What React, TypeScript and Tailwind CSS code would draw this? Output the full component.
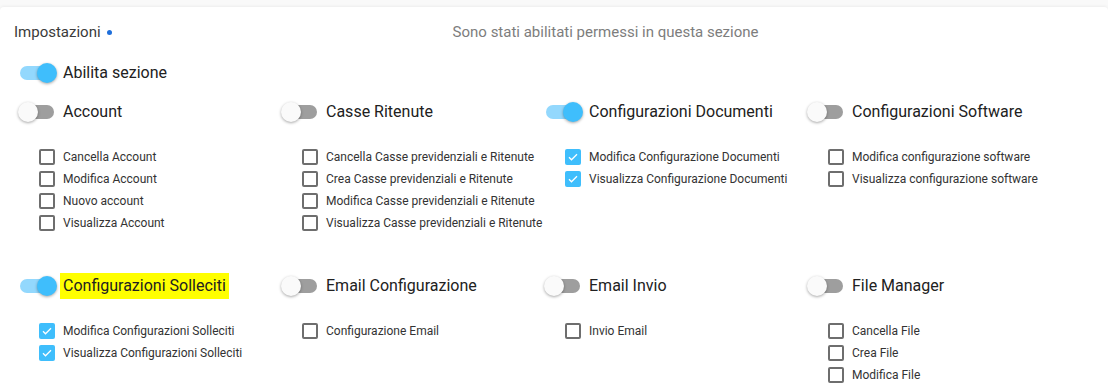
import React, { useState } from "react";

type Section = {
  title: string;
  enabled: boolean;
  highlight?: boolean;
  perms: { label: string; checked: boolean }[];
};

const initialSections: Section[] = [
  {
    title: "Account",
    enabled: false,
    perms: [
      { label: "Cancella Account", checked: false },
      { label: "Modifica Account", checked: false },
      { label: "Nuovo account", checked: false },
      { label: "Visualizza Account", checked: false },
    ],
  },
  {
    title: "Casse Ritenute",
    enabled: false,
    perms: [
      { label: "Cancella Casse previdenziali e Ritenute", checked: false },
      { label: "Crea Casse previdenziali e Ritenute", checked: false },
      { label: "Modifica Casse previdenziali e Ritenute", checked: false },
      { label: "Visualizza Casse previdenziali e Ritenute", checked: false },
    ],
  },
  {
    title: "Configurazioni Documenti",
    enabled: true,
    perms: [
      { label: "Modifica Configurazione Documenti", checked: true },
      { label: "Visualizza Configurazione Documenti", checked: true },
    ],
  },
  {
    title: "Configurazioni Software",
    enabled: false,
    perms: [
      { label: "Modifica configurazione software", checked: false },
      { label: "Visualizza configurazione software", checked: false },
    ],
  },
  {
    title: "Configurazioni Solleciti",
    enabled: true,
    highlight: true,
    perms: [
      { label: "Modifica Configurazioni Solleciti", checked: true },
      { label: "Visualizza Configurazioni Solleciti", checked: true },
    ],
  },
  {
    title: "Email Configurazione",
    enabled: false,
    perms: [{ label: "Configurazione Email", checked: false }],
  },
  {
    title: "Email Invio",
    enabled: false,
    perms: [{ label: "Invio Email", checked: false }],
  },
  {
    title: "File Manager",
    enabled: false,
    perms: [
      { label: "Cancella File", checked: false },
      { label: "Crea File", checked: false },
      { label: "Modifica File", checked: false },
    ],
  },
];

const Switch: React.FC<{ on: boolean; onClick: () => void }> = ({ on, onClick }) => (
  <button
    onClick={onClick}
    className={`relative w-[34px] h-[14px] rounded-full shrink-0 ${
      on ? "bg-[#93d8fd]" : "bg-[#9e9e9e]"
    }`}
  >
    <span
      className={`absolute top-[-3px] w-[20px] h-[20px] rounded-full shadow-[0_1px_3px_rgba(0,0,0,0.35)] ${
        on ? "left-[17px] bg-[#3fbefc]" : "left-[-2px] bg-[#fafafa]"
      }`}
    />
  </button>
);

const Check: React.FC<{ checked: boolean; onClick: () => void }> = ({ checked, onClick }) =>
  checked ? (
    <button
      onClick={onClick}
      className="w-[16px] h-[16px] rounded-[2px] bg-[#3fbefc] flex items-center justify-center shrink-0"
    >
      <svg width="12" height="12" viewBox="0 0 24 24">
        <path d="M4 12.5l5 5L20 6.5" fill="none" stroke="white" strokeWidth="2.6" />
      </svg>
    </button>
  ) : (
    <button
      onClick={onClick}
      className="w-[16px] h-[16px] rounded-[2px] border-2 border-[#6e6e6e] shrink-0"
    />
  );

export default function App() {
  const [enabled, setEnabled] = useState(true);
  const [sections, setSections] = useState<Section[]>(initialSections);

  const toggleSection = (i: number) => {
    const next = [...sections];
    next[i] = { ...next[i], enabled: !next[i].enabled };
    setSections(next);
  };

  const togglePerm = (i: number, j: number) => {
    const next = [...sections];
    const perms = [...next[i].perms];
    perms[j] = { ...perms[j], checked: !perms[j].checked };
    next[i] = { ...next[i], perms };
    setSections(next);
  };

  return (
    <div
      className="w-[1108px] h-[389px] overflow-hidden bg-[#f9f9f9] pt-[7px]"
      style={{ fontFamily: "Roboto, 'Liberation Sans', sans-serif" }}
    >
      <div className="bg-white h-full rounded-t-[4px] shadow-[0_-1px_3px_rgba(0,0,0,0.05)] pt-[15px] pl-[14px]">
        {/* header */}
        <div className="flex items-center h-5 text-[15px]">
          <span className="text-[#3a3a3a]">Impostazioni</span>
          <span className="ml-[6px] w-[5px] h-[5px] rounded-full bg-[#1e6fdb]" />
          <span className="ml-[341px] text-[#7d7d7d]">Sono stati abilitati permessi in questa sezione</span>
        </div>

        {/* main toggle */}
        <div className="flex items-center h-[38px] mt-[12px] pl-[6px]">
          <Switch on={enabled} onClick={() => setEnabled(!enabled)} />
          <span className="ml-[9px] text-[16px] text-[#212121]">Abilita sezione</span>
        </div>

        {/* sections */}
        <div className="grid grid-cols-[repeat(4,263px)] gap-y-[33px] mt-[1px]">
          {sections.map((s, i) => (
            <div key={s.title} className="flex flex-col">
              <div className="flex items-center h-[38px] pl-[6px]">
                <Switch on={s.enabled} onClick={() => toggleSection(i)} />
                {s.highlight ? (
                  <span className="ml-[6px] px-[3px] py-[1px] bg-[#ffff00] text-[16px] text-[#212121] whitespace-nowrap">
                    {s.title}
                  </span>
                ) : (
                  <span className="ml-[9px] text-[16px] text-[#212121] whitespace-nowrap">{s.title}</span>
                )}
              </div>
              <div className="flex flex-col mt-[15px] pl-[25px]">
                {s.perms.map((p, j) => (
                  <div key={p.label} className="flex items-center h-[22px]">
                    <Check checked={p.checked} onClick={() => togglePerm(i, j)} />
                    <span className="ml-[8px] text-[12px] text-[#333] whitespace-nowrap">{p.label}</span>
                  </div>
                ))}
              </div>
            </div>
          ))}
        </div>
      </div>
    </div>
  );
}
